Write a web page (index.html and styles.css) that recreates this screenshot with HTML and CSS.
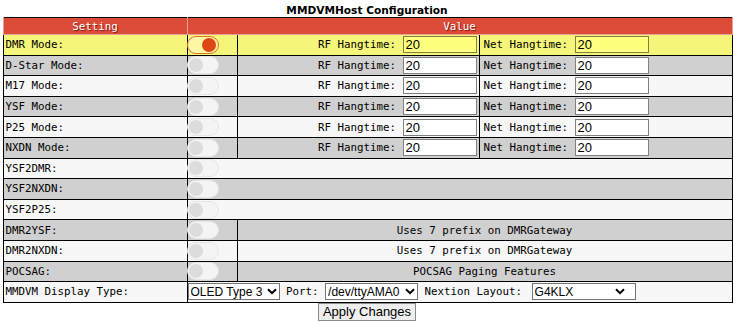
FILE: index.html
```html
<!DOCTYPE html>
<html lang="en">
<head>
  <meta charset="UTF-8">
  <meta name="viewport" content="width=device-width, initial-scale=1.0">
  <title>MMDVMHost Configuration - Pi-Star</title>
  <link rel="stylesheet" href="styles.css">
</head>
<body>
  <div class="container">
    <h2 class="title">MMDVMHost Configuration</h2>

    <table class="config">
      <colgroup>
        <col class="col-setting">
        <col class="col-toggle">
        <col class="col-rf">
        <col class="col-net">
      </colgroup>
      <tr>
        <th>Setting</th>
        <th colspan="3">Value</th>
      </tr>
      <tr class="hover">
        <td class="name">DMR Mode:</td>
        <td><span class="toggle on"></span></td>
        <td class="rf">RF Hangtime: <input type="text" value="20"></td>
        <td class="net">Net Hangtime: <input type="text" value="20"></td>
      </tr>
      <tr class="alt">
        <td class="name">D-Star Mode:</td>
        <td><span class="toggle"></span></td>
        <td class="rf">RF Hangtime: <input type="text" value="20"></td>
        <td class="net">Net Hangtime: <input type="text" value="20"></td>
      </tr>
      <tr>
        <td class="name">M17 Mode:</td>
        <td><span class="toggle"></span></td>
        <td class="rf">RF Hangtime: <input type="text" value="20"></td>
        <td class="net">Net Hangtime: <input type="text" value="20"></td>
      </tr>
      <tr class="alt">
        <td class="name">YSF Mode:</td>
        <td><span class="toggle"></span></td>
        <td class="rf">RF Hangtime: <input type="text" value="20"></td>
        <td class="net">Net Hangtime: <input type="text" value="20"></td>
      </tr>
      <tr>
        <td class="name">P25 Mode:</td>
        <td><span class="toggle"></span></td>
        <td class="rf">RF Hangtime: <input type="text" value="20"></td>
        <td class="net">Net Hangtime: <input type="text" value="20"></td>
      </tr>
      <tr class="alt">
        <td class="name">NXDN Mode:</td>
        <td><span class="toggle"></span></td>
        <td class="rf">RF Hangtime: <input type="text" value="20"></td>
        <td class="net">Net Hangtime: <input type="text" value="20"></td>
      </tr>
      <tr>
        <td class="name">YSF2DMR:</td>
        <td colspan="3"><span class="toggle"></span></td>
      </tr>
      <tr class="alt">
        <td class="name">YSF2NXDN:</td>
        <td colspan="3"><span class="toggle"></span></td>
      </tr>
      <tr>
        <td class="name">YSF2P25:</td>
        <td colspan="3"><span class="toggle"></span></td>
      </tr>
      <tr class="alt">
        <td class="name">DMR2YSF:</td>
        <td><span class="toggle"></span></td>
        <td colspan="2" class="note">Uses 7 prefix on DMRGateway</td>
      </tr>
      <tr>
        <td class="name">DMR2NXDN:</td>
        <td><span class="toggle"></span></td>
        <td colspan="2" class="note">Uses 7 prefix on DMRGateway</td>
      </tr>
      <tr class="alt">
        <td class="name">POCSAG:</td>
        <td><span class="toggle"></span></td>
        <td colspan="2" class="note">POCSAG Paging Features</td>
      </tr>
      <tr>
        <td class="name">MMDVM Display Type:</td>
        <td colspan="3" class="display">
          <span class="select sel-type">
            <select><option>OLED Type 3</option></select>
            <svg class="chevron" viewBox="0 0 10 7" width="10" height="7"><path d="M1 1.2 L5 5.2 L9 1.2" fill="none" stroke="#000" stroke-width="2"/></svg>
          </span>
          <span class="lbl">Port:</span>
          <span class="select sel-port">
            <select><option>/dev/ttyAMA0</option></select>
            <svg class="chevron" viewBox="0 0 10 7" width="10" height="7"><path d="M1 1.2 L5 5.2 L9 1.2" fill="none" stroke="#000" stroke-width="2"/></svg>
          </span>
          <span class="lbl">Nextion Layout:</span>
          <span class="select sel-layout">
            <select><option>G4KLX</option></select>
            <svg class="chevron" viewBox="0 0 10 7" width="10" height="7"><path d="M1 1.2 L5 5.2 L9 1.2" fill="none" stroke="#000" stroke-width="2"/></svg>
          </span>
        </td>
      </tr>
    </table>

    <div class="actions">
      <button type="button">Apply Changes</button>
    </div>
  </div>
</body>
</html>
```

FILE: styles.css
```css
body {
  margin: 0;
  font-family: "DejaVu Sans Mono", monospace;
  font-size: 10.8px;
  color: #000;
  background-color: #fff;
}
.container {
  width: 729px;
  margin: 0 auto;
}
.title {
  font-family: "DejaVu Sans", sans-serif;
  font-size: 10.6px;
  font-weight: bold;
  text-align: center;
  margin: 0;
  height: 17px;
  line-height: 21px;
}
.config {
  width: 729px;
  border-collapse: collapse;
  table-layout: fixed;
  border: 1px solid #000;
}
.col-setting { width: 184px; }
.col-toggle { width: 50px; }
.col-rf { width: 242px; }
.col-net { width: 253px; }
.config th {
  background-color: #dd4b39;
  color: #fff;
  font-weight: normal;
  text-shadow: 1px 1px 1px #6b1a10;
  height: 16px;
  padding: 0;
  border: 1px solid #e8a097;
  border-top: none;
}
.config td {
  height: 19.6px;
  padding: 0 2px;
  border: 1px solid #000;
  vertical-align: middle;
  white-space: nowrap;
  background-color: #f7f7f7;
}
.config tr.alt td {
  background-color: #d0d0d0;
}
.config tr.hover td {
  background-color: #f5f57a;
}
.config td.name {
  text-align: left;
}
.config td.rf {
  text-align: right;
}
.config td.net {
  text-align: left;
  padding-left: 4px;
}
.config td.note {
  text-align: center;
}
.config td.display {
  text-align: left;
  padding-left: 0;
}
input[type="text"] {
  box-sizing: border-box;
  width: 74px;
  height: 17px;
  padding: 0 2px;
  margin: 0;
  border: 1px solid #808080;
  font-family: "Liberation Sans", Arial, sans-serif;
  font-size: 13px;
  background-color: #fff;
  vertical-align: middle;
}
.hover input[type="text"] {
  background-color: #ffff80;
  border-color: #808040;
}
/* toggle switch */
.toggle {
  position: relative;
  display: inline-block;
  box-sizing: border-box;
  width: 32px;
  height: 18px;
  border-radius: 9px;
  border: 1px solid #e6e6e6;
  background-color: #f4f4f4;
  vertical-align: middle;
  margin-left: -3px;
}
.toggle::after {
  content: "";
  position: absolute;
  top: 1px;
  left: 1px;
  width: 14px;
  height: 14px;
  border-radius: 50%;
  background-color: #dcdcdc;
}
.toggle.on {
  background-color: #fdf7a6;
  border-color: #e0752a;
}
.toggle.on::after {
  left: auto;
  right: 2px;
  background-color: #dd4814;
}
/* selects with chevron */
.select {
  position: relative;
  display: inline-block;
  vertical-align: middle;
  height: 17px;
}
.select select {
  -webkit-appearance: none;
  appearance: none;
  box-sizing: border-box;
  width: 100%;
  height: 17px;
  padding: 0 0 0 2px;
  margin: 0;
  border: 1px solid #767676;
  border-radius: 0;
  background-color: #fff;
  color: #000;
  font-family: "Liberation Sans", Arial, sans-serif;
  font-size: 12px;
  vertical-align: top;
}
.chevron {
  position: absolute;
  right: 3px;
  top: 5px;
  pointer-events: none;
}
.sel-type { width: 92px; }
.sel-port { width: 93px; }
.sel-layout {
  width: 104px;
  margin-left: 3px;
}
.sel-layout .chevron { right: 11px; }
.actions {
  text-align: center;
}
button {
  height: 18px;
  padding: 0 4px;
  margin: 0;
  border: 1px solid #8a8a8a;
  border-radius: 0;
  background-color: #efefef;
  font-family: "Liberation Sans", Arial, sans-serif;
  font-size: 13px;
  line-height: 14px;
  cursor: pointer;
}
```
